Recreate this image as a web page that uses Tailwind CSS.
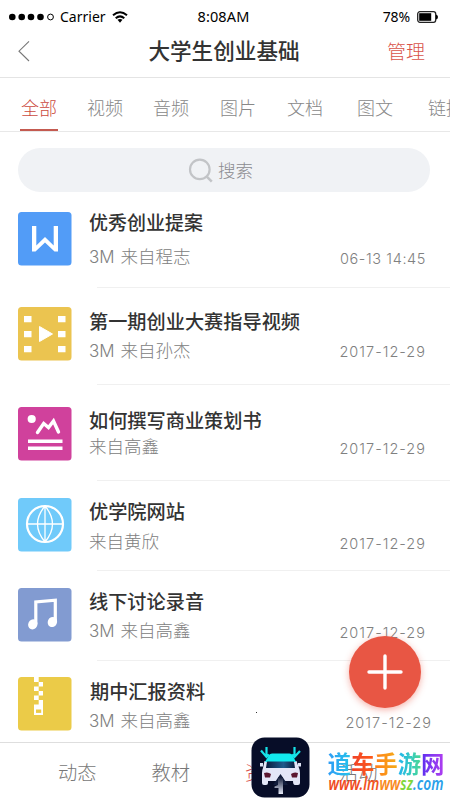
<!DOCTYPE html>
<html lang="zh-CN">
<head>
<meta charset="utf-8">
<title>大学生创业基础</title>
<script src="https://cdn.jsdelivr.net/npm/@tailwindcss/browser@4"></script>
</head>
<body class="bg-white">
<div class="relative flex h-[800px] w-[450px] flex-col overflow-hidden bg-white font-['Noto_Sans_CJK_SC',sans-serif] whitespace-nowrap">
  <!-- status bar -->
  <div class="grid h-[33px] shrink-0 grid-cols-[1fr_auto_1fr] items-center pr-[12px] pl-[9px] font-['Noto_Sans',sans-serif] text-[14px] leading-[33px] text-black">
    <div class="flex items-center">
      <svg class="h-[8px] w-[46px]" viewBox="0 0 46 8"><circle cx="3.3" cy="4" r="3.3"/><circle cx="12.7" cy="4" r="3.3"/><circle cx="22" cy="4" r="3.3"/><circle cx="31.5" cy="4" r="3.3"/><circle cx="41.5" cy="4" r="2.9" fill="none" stroke="#000" stroke-width="1"/></svg>
      <span class="ml-[5px] w-[46px]">Carrier</span>
      <svg class="ml-[6px] h-[12px] w-[16px]" viewBox="0 0 16 12" fill="none" stroke="#000" stroke-width="2"><path d="M1 4.2Q8-1.8 15 4.2M3.7 7.2Q8 3.6 12.3 7.2"/><path d="M5.5 8.8Q8 7 10.5 8.8L8 11.8Z" fill="#000" stroke="none"/></svg>
    </div>
    <span class="text-[14.5px] tracking-[0.1px]">8:08AM</span>
    <div class="flex items-center justify-end">
      <span class="tracking-[-0.1px]">78%</span>
      <svg class="ml-[7px] h-[12px] w-[21px]" viewBox="0 0 21 12"><rect x=".7" y=".7" width="18" height="10.6" rx="2.2" fill="#fff" stroke="#222" stroke-width="1.3"/><rect x="2.2" y="2.2" width="12" height="7.6"/><path d="M19 3.5Q21 4 21 6T19 8.5Z"/></svg>
    </div>
  </div>
  <!-- header -->
  <div class="flex h-[45px] shrink-0 items-start justify-between border-b border-[#e4e4e4] pr-[25px] pl-[17px]">
    <svg class="mt-[7px] h-[22px] w-[13px]" viewBox="0 0 13 22" fill="none" stroke="#777" stroke-width="1.1"><path d="M12 1.3 2 11.2 12 21"/></svg>
    <h1 class="ml-[31px] text-[21.6px] leading-[33px] font-medium text-[#333]">大学生创业基础</h1>
    <span class="text-[19px] leading-[36px] font-light text-[#d9534a]">管理</span>
  </div>
  <!-- tabs -->
  <div class="flex h-[54px] shrink-0 border-b border-[#e8e8e8] pl-[20px] text-[18px] leading-[58px] font-light text-[#888]">
    <div class="relative w-[67px] shrink-0 pl-[1px] text-[#cb4a40]">全部<i class="absolute bottom-0 left-0 h-[2px] w-[38px] bg-[#c45a50]"></i></div>
    <div class="w-[66px] shrink-0">视频</div>
    <div class="w-[67px] shrink-0">音频</div>
    <div class="w-[67px] shrink-0">图片</div>
    <div class="w-[70px] shrink-0">文档</div>
    <div class="w-[71px] shrink-0">图文</div>
    <div class="shrink-0">链接</div>
  </div>
  <!-- search -->
  <div class="mt-[16px] ml-[18px] flex h-[44px] w-[412px] shrink-0 items-center rounded-full bg-[#f0f2f5] pl-[170px]">
    <svg class="mt-[2px] h-[26px] w-[26px]" viewBox="0 0 26 26" fill="none" stroke="#c2c4c7" stroke-width="2.2"><circle cx="11.8" cy="11.4" r="9.8"/><path d="m18.8 18.6 5 5" stroke-width="2.6"/></svg>
    <span class="ml-[4px] text-[17.5px] font-light text-[#8b8b90]">搜索</span>
  </div>
  <!-- resources -->
  <div class="flex h-[96px] shrink-0 items-start pt-[20px] pl-[18px]">
    <svg class="h-[54px] w-[54px]" viewBox="0 0 54 54"><rect width="53.5" height="53.5" rx="3.5" fill="#529cf7"/><path d="M14 14H18.3V33.5L27 25 35.700 33.500V14H40V39.500H36.500L27 30.500 17.500 39.500H14Z" fill="#fff"/></svg>
    <div class="ml-[17px] flex-1">
      <div class="mt-[-3px] text-[19px] leading-[26px] font-medium text-[#333]">优秀创业提案</div>
      <div class="mt-[8px] flex justify-between pr-[24px] text-[17.5px] leading-[26px] font-light text-[#808080]"><span><span class="mr-[6px] font-['Inter',sans-serif] text-[17px]">3M</span>来自程志</span><time class="pt-[3px] font-['Inter',sans-serif] text-[14.5px] tracking-[0.6px]">06-13 14:45</time></div>
      <div class="mt-[15px] ml-[8px] h-px bg-[#f0f0f0]"></div>
    </div>
  </div>
  <div class="flex h-[97px] shrink-0 items-start pt-[19px] pl-[18px]">
    <svg class="h-[54px] w-[54px]" viewBox="0 0 54 54"><rect width="53.5" height="53.5" rx="3.5" fill="#ebc450"/><path d="M6 9h7.5v6.3H6zM6 24h7.5v6.3H6zM6 39h7.5v6.3H6zM40 9h7.5v6.3H40zM40 24h7.5v6.3H40zM40 39h7.5v6.3H40z" fill="#fff"/><path d="M21.5 19.5 34.5 27 21.5 34.5Z" fill="#fff" stroke="#fff" stroke-linejoin="round"/></svg>
    <div class="ml-[17px] flex-1">
      <div class="mt-[1px] text-[19.2px] leading-[26px] font-medium text-[#333]">第一期创业大赛指导视频</div>
      <div class="mt-[3px] flex justify-between pr-[24px] text-[17.5px] leading-[26px] font-light text-[#808080]"><span><span class="mr-[6px] font-['Inter',sans-serif] text-[17px]">3M</span>来自孙杰</span><time class="pt-[2px] font-['Inter',sans-serif] text-[14.5px] tracking-[1px]">2017-12-29</time></div>
      <div class="mt-[19px] ml-[8px] h-px bg-[#f0f0f0]"></div>
    </div>
  </div>
  <div class="flex h-[96px] shrink-0 items-start pt-[22px] pl-[18px]">
    <svg class="h-[54px] w-[54px]" viewBox="0 0 54 54"><rect width="53.5" height="53.5" rx="3.5" fill="#d0419c"/><circle cx="13.7" cy="12" r="4.1" fill="#fff"/><path d="M19.5 25.5 25.7 16.5 30.5 20.5 35.5 14 40.5 25" fill="none" stroke="#fff" stroke-width="3.4" stroke-linecap="round"/><path d="M10 32.5h34.5v3.5H10zM10 39.5h34.5v3.5H10z" fill="#fff"/></svg>
    <div class="ml-[17px] flex-1">
      <div class="text-[19.2px] leading-[26px] font-medium text-[#333]">如何撰写商业策划书</div>
      <div class="flex justify-between pr-[24px] text-[17.5px] leading-[26px] font-light text-[#808080]"><span>来自高鑫</span><time class="pt-[3px] font-['Inter',sans-serif] text-[14.5px] tracking-[1px]">2017-12-29</time></div>
      <div class="mt-[18px] ml-[8px] h-px bg-[#f0f0f0]"></div>
    </div>
  </div>
  <div class="flex h-[90px] shrink-0 items-start pt-[17px] pl-[18px]">
    <svg class="h-[54px] w-[54px]" viewBox="0 0 54 54"><rect width="53.5" height="53.5" rx="3.5" fill="#70cafa"/><g fill="none" stroke="#fff"><circle cx="27" cy="26" r="18" stroke-width="2.2"/><path d="M9 26H45M27 8V44M27 8Q12 26 27 44M27 8Q42 26 27 44" stroke-width="1.3"/></g></svg>
    <div class="ml-[17px] flex-1">
      <div class="text-[19.2px] leading-[26px] font-medium text-[#333]">优学院网站</div>
      <div class="mt-[4px] flex justify-between pr-[24px] text-[17.5px] leading-[26px] font-light text-[#808080]"><span>来自黄欣</span><time class="pt-[3px] font-['Inter',sans-serif] text-[14.5px] tracking-[1px]">2017-12-29</time></div>
      <div class="mt-[13px] ml-[8px] h-px bg-[#f0f0f0]"></div>
    </div>
  </div>
  <div class="flex h-[90px] shrink-0 items-start pt-[17px] pl-[18px]">
    <svg class="h-[54px] w-[54px]" viewBox="0 0 54 54"><rect width="53.5" height="53.5" rx="3.5" fill="#829bd1"/><path d="M17.8 36V14L37.3 12.2V34" fill="none" stroke="#fff" stroke-width="3.2"/><ellipse cx="14.8" cy="36.4" rx="4.6" ry="5.2" transform="rotate(25 14.8 36.4)" fill="#fff"/><ellipse cx="34.4" cy="34" rx="4.6" ry="5.2" transform="rotate(25 34.4 34)" fill="#fff"/></svg>
    <div class="ml-[17px] flex-1">
      <div class="text-[19.2px] leading-[26px] font-medium text-[#333]">线下讨论录音</div>
      <div class="mt-[3px] flex justify-between pr-[24px] text-[17.5px] leading-[26px] font-light text-[#808080]"><span><span class="mr-[6px] font-['Inter',sans-serif] text-[17px]">3M</span>来自高鑫</span><time class="pt-[3px] font-['Inter',sans-serif] text-[14.5px] tracking-[1px]">2017-12-29</time></div>
      <div class="mt-[14px] ml-[8px] h-px bg-[#f0f0f0]"></div>
    </div>
  </div>
  <div class="flex h-[81px] shrink-0 items-start pt-[16px] pl-[18px]">
    <svg class="h-[54px] w-[54px]" viewBox="0 0 54 54"><rect width="53.5" height="53.5" rx="3.5" fill="#ebcb48"/><path d="M16 0h4.7v5H16zM20.7 5H25v4.5h-4.3zM16 9.5h4.7V14H16zM20.7 14H25v4.5h-4.3zM16 18.5h4.7V23H16zM20.7 23H25v4.5h-4.3zM16 27.5h9V38h-9z" fill="#fff"/><path d="M18 32.5h5.2v3.4H18z" fill="#ebcb48"/></svg>
    <div class="ml-[18px] flex-1">
      <div class="mt-[1px] text-[19.2px] leading-[26px] font-medium text-[#333]">期中汇报资料</div>
      <div class="-ml-px mt-[3px] flex justify-between pr-[18px] text-[17.5px] leading-[26px] font-light text-[#808080]"><span><span class="mr-[6px] font-['Inter',sans-serif] text-[17px]">3M</span>来自高鑫</span><time class="pt-[3px] font-['Inter',sans-serif] text-[14.5px] tracking-[1px]">2017-12-29</time></div>
    </div>
  </div>
  <!-- bottom navigation -->
  <div class="flex h-[58px] shrink-0 border-t border-[#dedede] pl-[58px] text-[19.3px] leading-[58px] font-light text-[#777]">
    <span class="w-[93.5px]">动态</span><span class="w-[93.5px]">教材</span><span class="w-[94px] text-[#d9534a]">资料</span><span>活动</span>
  </div>
  <i class="absolute top-[712px] left-[256px] h-px w-px bg-[#333]"></i>
  <!-- add button -->
  <button class="absolute top-[636px] left-[349px] flex size-[72px] items-center justify-center rounded-full bg-[#e85644] shadow-[0_2px_7px_rgba(232,86,68,0.45)]" aria-label="添加">
    <svg class="size-[36px]" viewBox="0 0 36 36" stroke="#fff" stroke-width="3.4" stroke-linecap="round"><path d="M2 18H34M18 2V34"/></svg>
  </button>
  <!-- site badge -->
  <svg class="absolute top-[737px] left-[251px] h-[61px] w-[59px]" viewBox="0 0 59 61">
    <defs><linearGradient id="glass"><stop stop-color="#0b1c3e"/><stop offset=".6" stop-color="#1d5b8c"/><stop offset="1" stop-color="#0b1c3e"/></linearGradient><linearGradient id="road" x2="0" y2="1"><stop stop-color="#101a38"/><stop offset="1" stop-color="#e8ecfa"/></linearGradient></defs>
    <rect x=".5" y=".5" width="58" height="60" rx="13" fill="#070d28"/>
    <path d="M13.5 24H45.5L48 31Q49 33 49 36V46Q49 48 47 48H44Q42 48 42 44H17V46Q17 48 15 48H13Q11 48 11 46V36Q11 33 12 31Z" fill="#e3e6f7"/>
    <path d="M18 18Q19 16.5 21 16.5H38.5Q40.500 16.500 41.500 18L45 25H14Z" fill="#12e9ee"/>
    <path d="M16 24.500H43L44 31H15Z" fill="url(#glass)"/>
    <path d="M9 26h3v3.5H9zM47 26h3v3.5h-3z" fill="#dfe4f5"/>
    <path d="M13 36Q17 34.500 20 37L19 40.500H14ZM47 36Q43 34.500 40 37L41 40.500H46Z" fill="#5b1730"/>
    <path d="M29.5 37 37 48H22Z" fill="#101b3a"/><path d="M27 40H32V57H27.500V51H23.500V49.500L27 48Z" fill="url(#road)"/>
    <path d="M15.5 10V19.5M10 13.5 15.5 20 18 17.5M43.5 10V19.5M49 14 43.5 20 41 17.5" fill="none" stroke="#16e2e8" stroke-width="2.2"/>
  </svg>
  <div class="absolute top-[748px] left-[327.5px] w-[120px]">
    <div class="flex text-[23.4px] leading-[30px] font-bold">
      <span class="bg-linear-to-r from-[#2f9cf5] to-[#25c3ea] bg-clip-text text-transparent">道</span><span class="bg-linear-to-r from-[#f04028] to-[#ff5a16] bg-clip-text text-transparent">车</span><span class="bg-linear-to-r from-[#ff7b18] to-[#f4ad18] bg-clip-text text-transparent">手</span><span class="bg-linear-to-r from-[#22b4f0] to-[#4cd890] bg-clip-text text-transparent">游</span><span class="bg-linear-to-r from-[#5a2cf0] to-[#b23cf0] bg-clip-text text-transparent">网</span>
    </div>
    <svg class="mt-[-3px] h-[22px] w-[120px] overflow-visible" viewBox="0 0 120 22"><text x="0.5" y="15" textLength="115" lengthAdjust="spacingAndGlyphs" class="font-['Noto_Sans',sans-serif] text-[17px] font-semibold italic"><tspan fill="#f04a22">www.</tspan><tspan fill="#f2541f">lm</tspan><tspan fill="#f98a1c">ww</tspan><tspan fill="#7fd63c">sz</tspan><tspan fill="#2aa0ea">.com</tspan></text></svg>
  </div>
</div>
</body>
</html>
